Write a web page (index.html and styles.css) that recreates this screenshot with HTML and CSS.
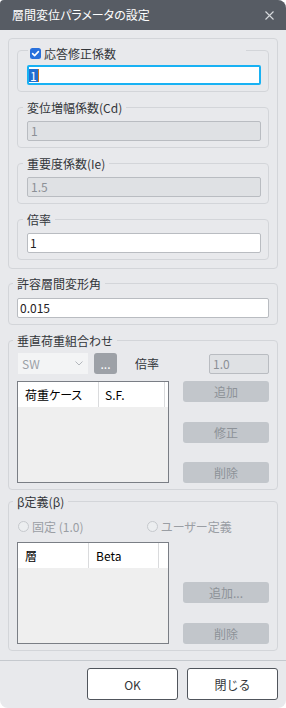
FILE: index.html
```html
<!DOCTYPE html>
<html lang="ja">
<head>
    <meta charset="UTF-8">
    <meta name="viewport" content="width=device-width, initial-scale=1.0">
    <title>層間変位パラメータの設定</title>
    <link rel="stylesheet" href="styles.css">
</head>
<body>

<div class="dialog">
    <div class="titlebar">
        <span class="title">層間変位パラメータの設定</span>
        <svg class="close-icon" width="9" height="9" viewBox="0 0 9 9">
            <path d="M0.5 0.5 L8.5 8.5 M8.5 0.5 L0.5 8.5" stroke="#d6d9dc" stroke-width="1.1" fill="none"/>
        </svg>
    </div>

    <div class="content">
        <!-- response correction block -->
        <fieldset class="frame frame-plain">
            <fieldset class="group group-check">
                <legend class="legend-check">
                    <svg class="checkbox" width="11" height="11" viewBox="0 0 11 11">
                        <rect x="0" y="0" width="11" height="11" rx="2.5" fill="#2870dc"/>
                        <path d="M2.6 5.6 L4.6 7.6 L8.4 3.6" stroke="#fff" stroke-width="1.6" fill="none" stroke-linecap="round" stroke-linejoin="round"/>
                    </svg>
                    <span>応答修正係数</span>
                </legend>
                <div class="field field-active"><span class="selected">1</span><span class="caret"></span></div>
            </fieldset>

            <fieldset class="group">
                <legend>変位増幅係数(Cd)</legend>
                <div class="field field-disabled">1</div>
            </fieldset>

            <fieldset class="group">
                <legend>重要度係数(Ie)</legend>
                <div class="field field-disabled">1.5</div>
            </fieldset>

            <fieldset class="group">
                <legend>倍率</legend>
                <div class="field">1</div>
            </fieldset>
        </fieldset>

        <fieldset class="frame frame-drift">
            <legend>許容層間変形角</legend>
            <div class="field">0.015</div>
        </fieldset>

        <!-- vertical load combination -->
        <fieldset class="frame frame-load">
            <legend>垂直荷重組合わせ</legend>
            <div class="combo-row">
                <div class="combo">
                    <span>SW</span>
                    <svg width="8" height="5" viewBox="0 0 8 5">
                        <path d="M0.5 0.5 L4 4 L7.5 0.5" stroke="#b3b7bc" stroke-width="1" fill="none"/>
                    </svg>
                </div>
                <div class="dots-button">...</div>
                <span class="rate-label">倍率</span>
                <div class="field field-disabled rate-field">1.0</div>
            </div>
            <div class="list-row">
                <div class="table">
                    <div class="table-head">
                        <div class="cell load-case">荷重ケース</div>
                        <div class="cell load-sf">S.F.</div>
                    </div>
                </div>
                <div class="side-buttons spread">
                    <div class="side-button">追加</div>
                    <div class="side-button">修正</div>
                    <div class="side-button">削除</div>
                </div>
            </div>
        </fieldset>

        <!-- beta definition -->
        <fieldset class="frame frame-beta">
            <legend>β定義(β)</legend>
            <div class="radio-row">
                <label class="radio"><span class="radio-dot"></span>固定 (1.0)</label>
                <label class="radio"><span class="radio-dot"></span>ユーザー定義</label>
            </div>
            <div class="list-row">
                <div class="table">
                    <div class="table-head">
                        <div class="cell beta-story">層</div>
                        <div class="cell beta-value">Beta</div>
                    </div>
                </div>
                <div class="side-buttons bottom">
                    <div class="side-button">追加...</div>
                    <div class="side-button">削除</div>
                </div>
            </div>
        </fieldset>
    </div>

    <div class="footer">
        <button class="dialog-button">OK</button>
        <button class="dialog-button">閉じる</button>
    </div>
</div>

</body>
</html>
```

FILE: styles.css
```css
body {
    margin: 0;
    background: #fff;
    font-family: "Noto Sans CJK JP", "Noto Sans", sans-serif;
    font-size: 12px;
    font-feature-settings: "palt";
    color: #33363a;
}

.dialog {
    width: 286px;
    height: 708px;
    background: #e8e9ec;
    border-radius: 4px 8px 8px 8px;
    overflow: hidden;
    display: flex;
    flex-direction: column;
}

.titlebar {
    height: 30px;
    flex: none;
    box-sizing: border-box;
    padding: 0 12px;
    background: #575c64;
    color: #fff;
    display: flex;
    align-items: center;
    justify-content: space-between;
}

.title {
    font-size: 12px;
    line-height: 16px;
}

.close-icon {
    display: block;
}

.content {
    padding: 8px 8px 0;
}

fieldset {
    margin: 0;
    min-width: 0;
    border: 1px solid #d3d5d9;
    border-radius: 4px;
}

legend {
    margin-left: -4px;
    padding: 0 4px;
    font-size: 12px;
    line-height: 15px;
    color: #33363a;
}

.frame {
    padding: 0 8px 6px;
}

.frame-plain {
    padding: 1px 8px 8px;
}

.group {
    margin-top: 8px;
    padding: 6px 7px 6px 9px;
}

.group-check {
    margin-top: 0;
    padding-top: 4px;
}

.legend-check {
    display: flex;
    align-items: center;
    gap: 3px;
    width: 216px;
    margin-left: 1px;
    padding: 6px 0 0 2px;
}

.checkbox {
    display: block;
}

.frame-drift {
    margin-top: 7px;
    padding-top: 7px;
}

.frame-load {
    margin-top: 8px;
    padding-top: 5px;
}

.frame-beta {
    margin-top: 4px;
    padding-top: 9px;
}

/* text boxes */
.field {
    height: 20px;
    box-sizing: border-box;
    padding: 0 2px;
    background: #fff;
    border: 1px solid #b9bcc1;
    border-radius: 2px;
    line-height: 18px;
    color: #1f2124;
    display: flex;
    align-items: center;
}

.field-active {
    padding: 0;
    border: 2px solid #18b1f3;
}

.selected {
    background: #1f6fd1;
    color: #fff;
    line-height: 13px;
    padding: 0 1px;
}

.caret {
    width: 1px;
    height: 13px;
    background: #c9761c;
}

.field-disabled {
    padding-left: 3px;
    background: #dfe1e4;
    color: #8c9096;
}

/* load combination */
.combo-row {
    height: 21px;
    display: flex;
    align-items: center;
}

.combo {
    width: 70px;
    height: 21px;
    margin-left: 1px;
    box-sizing: border-box;
    padding: 0 5px 0 4px;
    background: #f3f4f5;
    color: #9ba0a6;
    display: flex;
    align-items: center;
    justify-content: space-between;
}

.dots-button {
    width: 23px;
    height: 21px;
    margin-left: 6px;
    background: #9da1a7;
    border-radius: 3px;
    color: #fff;
    text-align: center;
    line-height: 21px;
}

.rate-label {
    margin-left: 18px;
}

.rate-field {
    width: 60px;
    height: 20px;
    margin-left: auto;
}

.list-row {
    display: flex;
    margin-top: 7px;
}

.frame-beta .list-row {
    margin-top: 9px;
}

.table {
    width: 152px;
    height: 102px;
    box-sizing: border-box;
    border: 1px solid #7a7e85;
    background: #efefef;
}

.table-head {
    height: 25px;
    background: #fff;
    display: flex;
    color: #000;
}

.cell {
    box-sizing: border-box;
    border-right: 1px solid #dadbdd;
    line-height: 25px;
}

.load-case {
    width: 81px;
    padding-left: 7px;
}

.load-sf {
    width: 66px;
    padding-left: 6px;
}

.beta-story {
    width: 71px;
    padding-left: 7px;
}

.beta-value {
    width: 70px;
    padding-left: 7px;
}

.side-buttons {
    width: 86px;
    margin-left: auto;
    display: flex;
    flex-direction: column;
}

.side-buttons.spread {
    justify-content: space-between;
}

.side-buttons.bottom {
    justify-content: flex-end;
    gap: 20px;
}

.side-button {
    height: 21px;
    background: #c2c6cb;
    border-radius: 3px;
    color: #8d9298;
    text-align: center;
    line-height: 21px;
}

/* beta radios */
.radio-row {
    height: 15px;
    margin-left: 1px;
    display: grid;
    grid-template-columns: 129px auto;
    align-items: center;
    color: #9a9ea4;
}

.radio {
    display: flex;
    align-items: center;
    gap: 3px;
}

.radio-dot {
    width: 11px;
    height: 11px;
    box-sizing: border-box;
    border: 1px solid #c6c9cd;
    border-radius: 50%;
    background: #eceef0;
}

/* bottom bar */
.footer {
    margin-top: 9px;
    padding: 7px 8px 0;
    border-top: 1px solid #c5c9ce;
    display: flex;
    justify-content: flex-end;
    gap: 9px;
}

.dialog-button {
    width: 91px;
    height: 32px;
    background: #fff;
    border: 1px solid #50555c;
    border-radius: 3px;
    font-family: inherit;
    font-size: 12px;
    color: #33363a;
}
```
